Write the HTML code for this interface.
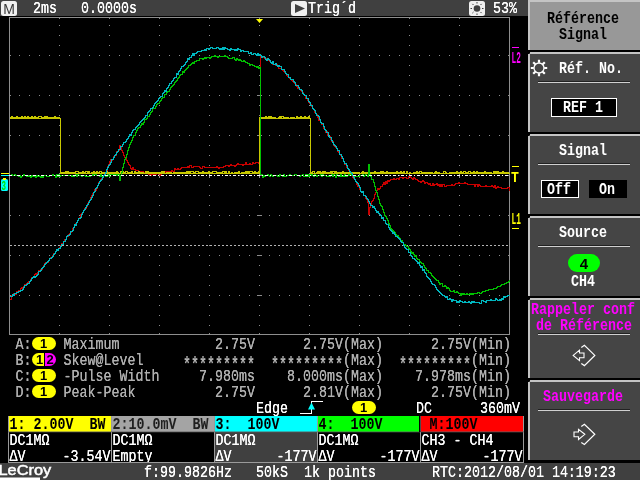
<!DOCTYPE html>
<html lang="fr"><head><meta charset="utf-8"><title>LeCroy - Référence Signal</title>
<style>html,body{margin:0;padding:0;background:#000;overflow:hidden}svg{display:block;will-change:transform}text{font-family:"Liberation Mono",monospace;font-size:16.5px;white-space:pre}.s text,.s{font-family:"Liberation Sans",sans-serif}</style></head><body>
<svg width="640" height="480" viewBox="0 0 640 480">
<defs><filter id="b" x="-2%" y="-2%" width="104%" height="104%"><feOffset dx="0.55" dy="0" result="o"/><feMerge><feMergeNode in="SourceGraphic"/><feMergeNode in="o"/></feMerge></filter> <filter id="b3" x="-2%" y="-2%" width="104%" height="104%"><feOffset dx="0.8" dy="0" result="o"/><feMerge><feMergeNode in="SourceGraphic"/><feMergeNode in="o"/></feMerge></filter><filter id="b2" x="-2%" y="-2%" width="104%" height="104%"><feOffset dx="0.4" dy="0" result="o"/><feMerge><feMergeNode in="SourceGraphic"/><feMergeNode in="o"/></feMerge></filter></defs>
<rect width="640" height="480" fill="#000"/>
<rect x="0" y="0" width="528" height="16" fill="#404040"/>
<rect x="1" y="1" width="16" height="15" rx="2.5" fill="#f0f0f0"/>
<text class="s" x="9" y="14" text-anchor="middle" fill="#383838" style="font-size:14px">M</text>
<text transform="translate(33,13) scale(0.808,1)" fill="#fff" filter="url(#b)">2ms</text>
<text transform="translate(81,13) scale(0.808,1)" fill="#fff" filter="url(#b)">0.0000s</text>
<rect x="291" y="1" width="16" height="15" rx="2.5" fill="#f0f0f0"/>
<path d="M295,4 L305,8.5 L295,13 Z" fill="#404040"/>
<text transform="translate(308,13) scale(0.808,1)" fill="#fff" filter="url(#b)">Trig´d</text>
<rect x="469" y="1" width="16" height="15" rx="2.5" fill="#f0f0f0"/>
<circle cx="477" cy="8.5" r="3.3" fill="#404040"/>
<path d="M482.0,8.5 L483.5,8.5 M480.5,12.0 L481.6,13.1 M477.0,13.5 L477.0,15.0 M473.5,12.0 L472.4,13.1 M472.0,8.5 L470.5,8.5 M473.5,5.0 L472.4,3.9 M477.0,3.5 L477.0,2.0 M480.5,5.0 L481.6,3.9" stroke="#404040" stroke-width="1" fill="none"/>
<text transform="translate(493,13) scale(0.808,1)" fill="#fff" filter="url(#b)">53%</text>
<g shape-rendering="crispEdges">
<line x1="59.5" y1="25" x2="59.5" y2="326" stroke="#8c8c8c" stroke-width="1" stroke-dasharray="1,9"/>
<line x1="109.5" y1="25" x2="109.5" y2="326" stroke="#8c8c8c" stroke-width="1" stroke-dasharray="1,9"/>
<line x1="159.5" y1="25" x2="159.5" y2="326" stroke="#8c8c8c" stroke-width="1" stroke-dasharray="1,9"/>
<line x1="209.5" y1="25" x2="209.5" y2="326" stroke="#8c8c8c" stroke-width="1" stroke-dasharray="1,9"/>
<line x1="259.5" y1="25" x2="259.5" y2="326" stroke="#8c8c8c" stroke-width="1" stroke-dasharray="1,9"/>
<line x1="309.5" y1="25" x2="309.5" y2="326" stroke="#8c8c8c" stroke-width="1" stroke-dasharray="1,9"/>
<line x1="359.5" y1="25" x2="359.5" y2="326" stroke="#8c8c8c" stroke-width="1" stroke-dasharray="1,9"/>
<line x1="409.5" y1="25" x2="409.5" y2="326" stroke="#8c8c8c" stroke-width="1" stroke-dasharray="1,9"/>
<line x1="459.5" y1="25" x2="459.5" y2="326" stroke="#8c8c8c" stroke-width="1" stroke-dasharray="1,9"/>
<line x1="19" y1="55.5" x2="500" y2="55.5" stroke="#8c8c8c" stroke-width="1" stroke-dasharray="1,9"/>
<line x1="19" y1="95.5" x2="500" y2="95.5" stroke="#8c8c8c" stroke-width="1" stroke-dasharray="1,9"/>
<line x1="19" y1="135.5" x2="500" y2="135.5" stroke="#8c8c8c" stroke-width="1" stroke-dasharray="1,9"/>
<line x1="19" y1="175.5" x2="500" y2="175.5" stroke="#8c8c8c" stroke-width="1" stroke-dasharray="1,9"/>
<line x1="19" y1="215.5" x2="500" y2="215.5" stroke="#8c8c8c" stroke-width="1" stroke-dasharray="1,9"/>
<line x1="19" y1="255.5" x2="500" y2="255.5" stroke="#8c8c8c" stroke-width="1" stroke-dasharray="1,9"/>
<line x1="19" y1="295.5" x2="500" y2="295.5" stroke="#8c8c8c" stroke-width="1" stroke-dasharray="1,9"/>
<rect x="9.5" y="17.5" width="500" height="317" fill="none" stroke="#8e8e8e" stroke-width="1"/>
<path d="M10,55.5 h1 M508,55.5 h1 M257,55.5 h5 M10,95.5 h1 M508,95.5 h1 M257,95.5 h5 M10,135.5 h1 M508,135.5 h1 M257,135.5 h5 M10,175.5 h1 M508,175.5 h1 M257,175.5 h5 M10,215.5 h1 M508,215.5 h1 M257,215.5 h5 M10,255.5 h1 M508,255.5 h1 M257,255.5 h5 M10,295.5 h1 M508,295.5 h1 M257,295.5 h5 M59.5,18 v1 M59.5,333 v1 M59.5,173 v5 M109.5,18 v1 M109.5,333 v1 M109.5,173 v5 M159.5,18 v1 M159.5,333 v1 M159.5,173 v5 M209.5,18 v1 M209.5,333 v1 M209.5,173 v5 M259.5,18 v1 M259.5,333 v1 M259.5,173 v5 M309.5,18 v1 M309.5,333 v1 M309.5,173 v5 M359.5,18 v1 M359.5,333 v1 M359.5,173 v5 M409.5,18 v1 M409.5,333 v1 M409.5,173 v5 M459.5,18 v1 M459.5,333 v1 M459.5,173 v5" stroke="#8c8c8c" stroke-width="1" fill="none"/>
<line x1="10" y1="245.5" x2="509" y2="245.5" stroke="#b4b4b4" stroke-width="1" stroke-dasharray="2,2"/>
</g>
<g shape-rendering="crispEdges">
<path d="M10,299.5H11.5V295.5H12.5V294.5H13.5V293.5H14.5V293.5H15.5V294.5H16.5V291.5H17.5V291.5H18.5V290.5H19.5V291.5H20.5V288.5H21.5V287.5H22.5V288.5H23.5V286.5H24.5V284.5H25.5V285.5H26.5V283.5H27.5V282.5H28.5V281.5H29.5V281.5H30.5V279.5H31.5V277.5H32.5V277.5H33.5V277.5H34.5V274.5H35.5V273.5H36.5V274.5H37.5V272.5H38.5V270.5H39.5V270.5H40.5V269.5H41.5V269.5H42.5V267.5H43.5V265.5H44.5V263.5H45.5V262.5H46.5V262.5H47.5V262.5H48.5V260.5H49.5V258.5H50.5V257.5H51.5V257.5H52.5V255.5H53.5V253.5H54.5V253.5H55.5V251.5H56.5V250.5H57.5V249.5H58.5V248.5H59.5V247.5H60.5V245.5H61.5V243.5H62.5V244.5H63.5V241.5H64.5V239.5H65.5V239.5H66.5V236.5H67.5V236.5H68.5V234.5H69.5V233.5H70.5V232.5H71.5V231.5H72.5V228.5H73.5V227.5H74.5V225.5H75.5V223.5H76.5V222.5H77.5V220.5H78.5V218.5H79.5V217.5H80.5V214.5H81.5V213.5H82.5V212.5H83.5V210.5H84.5V208.5H85.5V208.5H86.5V206.5H87.5V203.5H88.5V201.5H89.5V200.5H90.5V197.5H91.5V195.5H92.5V193.5H93.5V192.5H94.5V189.5H95.5V190.5H96.5V188.5H97.5V185.5H98.5V182.5H99.5V181.5H100.5V179.5H101.5V178.5H102.5V176.5H103.5V175.5H104.5V174.5H105.5V172.5H106.5V170.5H107.5V166.5H108.5V164.5H109.5V161.5H110.5V159.5H111.5V160.5H112.5V159.5H113.5V156.5H114.5V155.5H115.5V155.5H116.5V151.5H117.5V151.5H118.5V150.5H119.5V145.5H120.5V147.5H121.5V150.5H122.5V152.5H123.5V155.5H124.5V157.5H125.5V158.5H126.5V160.5H127.5V162.5H128.5V164.5H129.5V165.5H130.5V168.5H131.5V169.5H132.5V167.5H133.5V169.5H134.5V169.5H135.5V170.5H136.5V170.5H137.5V170.5H138.5V172.5H139.5V171.5H140.5V171.5H141.5V171.5H142.5V171.5H143.5V173.5H144.5V172.5H145.5V173.5H146.5V173.5H147.5V172.5H148.5V174.5H149.5V174.5H150.5V175.5H151.5V173.5H152.5V174.5H153.5V174.5H154.5V174.5H155.5V174.5H156.5V173.5H157.5V173.5H158.5V175.5H159.5V175.5H160.5V174.5H161.5V173.5H162.5V172.5H163.5V173.5H164.5V173.5H165.5V171.5H166.5V172.5H167.5V171.5H168.5V171.5H169.5V171.5H170.5V171.5H171.5V170.5H172.5V171.5H173.5V171.5H174.5V168.5H175.5V169.5H176.5V169.5H177.5V168.5H178.5V169.5H179.5V169.5H180.5V168.5H181.5V167.5H182.5V167.5H183.5V167.5H184.5V167.5H185.5V167.5H186.5V167.5H187.5V166.5H188.5V167.5H189.5V165.5H190.5V165.5H191.5V167.5H192.5V167.5H193.5V166.5H194.5V166.5H195.5V166.5H196.5V166.5H197.5V166.5H198.5V166.5H199.5V167.5H200.5V168.5H201.5V168.5H202.5V166.5H203.5V166.5H204.5V167.5H205.5V167.5H206.5V167.5H207.5V167.5H208.5V167.5H209.5V167.5H210.5V167.5H211.5V167.5H212.5V167.5H213.5V167.5H214.5V167.5H215.5V167.5H216.5V166.5H217.5V167.5H218.5V168.5H219.5V167.5H220.5V167.5H221.5V167.5H222.5V167.5H223.5V166.5H224.5V166.5H225.5V165.5H226.5V165.5H227.5V165.5H228.5V166.5H229.5V165.5H230.5V164.5H231.5V165.5H232.5V165.5H233.5V165.5H234.5V166.5H235.5V165.5H236.5V164.5H237.5V163.5H238.5V164.5H239.5V164.5H240.5V164.5H241.5V164.5H242.5V165.5H243.5V164.5H244.5V164.5H245.5V162.5H246.5V164.5H247.5V164.5H248.5V164.5H249.5V163.5H250.5V164.5H251.5V164.5H252.5V162.5H253.5V163.5H254.5V163.5H255.5V162.5H256.5V162.5H257.5V162.5H258.5V163.5H259.5V162.5H260.5V56.5H261.5V56.5H262.5V57.5H263.5V57.5H264.5V58.5H265.5V58.5H266.5V58.5H267.5V60.5H268.5V60.5H269.5V61.5H270.5V62.5H271.5V62.5H272.5V64.5H273.5V64.5H274.5V64.5H275.5V65.5H276.5V64.5H277.5V66.5H278.5V68.5H279.5V68.5H280.5V68.5H281.5V69.5H282.5V70.5H283.5V71.5H284.5V72.5H285.5V73.5H286.5V75.5H287.5V76.5H288.5V77.5H289.5V78.5H290.5V79.5H291.5V80.5H292.5V81.5H293.5V82.5H294.5V83.5H295.5V84.5H296.5V86.5H297.5V88.5H298.5V88.5H299.5V89.5H300.5V90.5H301.5V91.5H302.5V92.5H303.5V94.5H304.5V95.5H305.5V98.5H306.5V98.5H307.5V100.5H308.5V102.5H309.5V103.5H310.5V104.5H311.5V106.5H312.5V108.5H313.5V109.5H314.5V112.5H315.5V113.5H316.5V114.5H317.5V117.5H318.5V120.5H319.5V120.5H320.5V122.5H321.5V124.5H322.5V124.5H323.5V128.5H324.5V129.5H325.5V132.5H326.5V131.5H327.5V135.5H328.5V136.5H329.5V136.5H330.5V139.5H331.5V141.5H332.5V141.5H333.5V145.5H334.5V146.5H335.5V147.5H336.5V148.5H337.5V151.5H338.5V152.5H339.5V154.5H340.5V155.5H341.5V158.5H342.5V158.5H343.5V161.5H344.5V164.5H345.5V163.5H346.5V167.5H347.5V168.5H348.5V170.5H349.5V172.5H350.5V172.5H351.5V175.5H352.5V177.5H353.5V178.5H354.5V179.5H355.5V181.5H356.5V184.5H357.5V186.5H358.5V186.5H359.5V189.5H360.5V191.5H361.5V192.5H362.5V192.5H363.5V195.5H364.5V195.5H365.5V198.5H366.5V199.5H367.5V202.5H368.5V214.5H369.5V207.5H370.5V205.5H371.5V201.5H372.5V200.5H373.5V198.5H374.5V194.5H375.5V192.5H376.5V190.5H377.5V188.5H378.5V189.5H379.5V188.5H380.5V186.5H381.5V186.5H382.5V184.5H383.5V182.5H384.5V184.5H385.5V181.5H386.5V183.5H387.5V180.5H388.5V181.5H389.5V180.5H390.5V179.5H391.5V179.5H392.5V179.5H393.5V178.5H394.5V179.5H395.5V179.5H396.5V178.5H397.5V178.5H398.5V179.5H399.5V177.5H400.5V177.5H401.5V177.5H402.5V178.5H403.5V177.5H404.5V177.5H405.5V177.5H406.5V178.5H407.5V178.5H408.5V176.5H409.5V176.5H410.5V177.5H411.5V178.5H412.5V179.5H413.5V177.5H414.5V178.5H415.5V179.5H416.5V179.5H417.5V180.5H418.5V181.5H419.5V181.5H420.5V182.5H421.5V181.5H422.5V180.5H423.5V181.5H424.5V183.5H425.5V182.5H426.5V182.5H427.5V183.5H428.5V184.5H429.5V183.5H430.5V185.5H431.5V185.5H432.5V183.5H433.5V185.5H434.5V184.5H435.5V184.5H436.5V183.5H437.5V185.5H438.5V184.5H439.5V186.5H440.5V184.5H441.5V186.5H442.5V184.5H443.5V184.5H444.5V186.5H445.5V186.5H446.5V185.5H447.5V185.5H448.5V185.5H449.5V185.5H450.5V185.5H451.5V184.5H452.5V185.5H453.5V185.5H454.5V184.5H455.5V183.5H456.5V183.5H457.5V183.5H458.5V182.5H459.5V183.5H460.5V183.5H461.5V183.5H462.5V183.5H463.5V183.5H464.5V182.5H465.5V183.5H466.5V183.5H467.5V184.5H468.5V184.5H469.5V184.5H470.5V184.5H471.5V184.5H472.5V184.5H473.5V184.5H474.5V186.5H475.5V184.5H476.5V184.5H477.5V186.5H478.5V184.5H479.5V185.5H480.5V186.5H481.5V186.5H482.5V186.5H483.5V186.5H484.5V186.5H485.5V185.5H486.5V186.5H487.5V186.5H488.5V186.5H489.5V186.5H490.5V186.5H491.5V185.5H492.5V186.5H493.5V187.5H494.5V185.5H495.5V188.5H496.5V187.5H497.5V186.5H498.5V187.5H499.5V187.5H500.5V187.5H501.5V188.5H502.5V188.5H503.5V188.5H504.5V188.5H505.5V188.5H506.5V188.5H507.5V187.5H508.5V187.5H509.5V190.5H510" fill="none" stroke="#c80000" stroke-width="1" stroke-linejoin="miter"/>
<path d="M10,118.5H11.5V118.5H12.5V118.5H13.5V118.5H14.5V118.5H15.5V118.5H16.5V118.5H17.5V118.5H18.5V118.5H19.5V118.5H20.5V118.5H21.5V118.5H22.5V118.5H23.5V118.5H24.5V118.5H25.5V118.5H26.5V118.5H27.5V118.5H28.5V118.5H29.5V118.5H30.5V118.5H31.5V118.5H32.5V118.5H33.5V118.5H34.5V118.5H35.5V118.5H36.5V118.5H37.5V118.5H38.5V118.5H39.5V118.5H40.5V118.5H41.5V118.5H42.5V118.5H43.5V118.5H44.5V118.5H45.5V118.5H46.5V118.5H47.5V118.5H48.5V118.5H49.5V118.5H50.5V118.5H51.5V118.5H52.5V118.5H53.5V118.5H54.5V118.5H55.5V118.5H56.5V118.5H57.5V118.5H58.5V118.5H59.5V118.5H60.5V173.5H61.5V173.5H62.5V173.5H63.5V173.5H64.5V173.5H65.5V173.5H66.5V173.5H67.5V173.5H68.5V173.5H69.5V173.5H70.5V173.5H71.5V173.5H72.5V173.5H73.5V173.5H74.5V173.5H75.5V173.5H76.5V173.5H77.5V173.5H78.5V173.5H79.5V173.5H80.5V173.5H81.5V173.5H82.5V173.5H83.5V173.5H84.5V173.5H85.5V173.5H86.5V173.5H87.5V173.5H88.5V173.5H89.5V173.5H90.5V173.5H91.5V173.5H92.5V173.5H93.5V173.5H94.5V173.5H95.5V173.5H96.5V173.5H97.5V173.5H98.5V173.5H99.5V173.5H100.5V173.5H101.5V173.5H102.5V173.5H103.5V173.5H104.5V173.5H105.5V173.5H106.5V173.5H107.5V173.5H108.5V173.5H109.5V173.5H110.5V173.5H111.5V173.5H112.5V173.5H113.5V173.5H114.5V173.5H115.5V173.5H116.5V173.5H117.5V173.5H118.5V173.5H119.5V173.5H120.5V173.5H121.5V173.5H122.5V173.5H123.5V173.5H124.5V173.5H125.5V173.5H126.5V173.5H127.5V173.5H128.5V173.5H129.5V173.5H130.5V173.5H131.5V173.5H132.5V173.5H133.5V173.5H134.5V173.5H135.5V173.5H136.5V173.5H137.5V173.5H138.5V173.5H139.5V173.5H140.5V173.5H141.5V173.5H142.5V173.5H143.5V173.5H144.5V173.5H145.5V173.5H146.5V173.5H147.5V173.5H148.5V173.5H149.5V173.5H150.5V173.5H151.5V173.5H152.5V173.5H153.5V173.5H154.5V173.5H155.5V173.5H156.5V173.5H157.5V173.5H158.5V173.5H159.5V173.5H160.5V173.5H161.5V173.5H162.5V173.5H163.5V173.5H164.5V173.5H165.5V173.5H166.5V173.5H167.5V173.5H168.5V173.5H169.5V173.5H170.5V173.5H171.5V173.5H172.5V173.5H173.5V173.5H174.5V173.5H175.5V173.5H176.5V173.5H177.5V173.5H178.5V173.5H179.5V173.5H180.5V173.5H181.5V173.5H182.5V173.5H183.5V173.5H184.5V173.5H185.5V173.5H186.5V173.5H187.5V173.5H188.5V173.5H189.5V173.5H190.5V173.5H191.5V173.5H192.5V173.5H193.5V173.5H194.5V173.5H195.5V173.5H196.5V173.5H197.5V173.5H198.5V173.5H199.5V173.5H200.5V173.5H201.5V173.5H202.5V173.5H203.5V173.5H204.5V173.5H205.5V173.5H206.5V173.5H207.5V173.5H208.5V173.5H209.5V173.5H210.5V173.5H211.5V173.5H212.5V173.5H213.5V173.5H214.5V173.5H215.5V173.5H216.5V173.5H217.5V173.5H218.5V173.5H219.5V173.5H220.5V173.5H221.5V173.5H222.5V173.5H223.5V173.5H224.5V173.5H225.5V173.5H226.5V173.5H227.5V173.5H228.5V173.5H229.5V173.5H230.5V173.5H231.5V173.5H232.5V173.5H233.5V173.5H234.5V173.5H235.5V173.5H236.5V173.5H237.5V173.5H238.5V173.5H239.5V173.5H240.5V173.5H241.5V173.5H242.5V173.5H243.5V173.5H244.5V173.5H245.5V173.5H246.5V173.5H247.5V173.5H248.5V173.5H249.5V173.5H250.5V173.5H251.5V173.5H252.5V173.5H253.5V173.5H254.5V173.5H255.5V173.5H256.5V173.5H257.5V173.5H258.5V173.5H259.5V118.5H260.5V118.5H261.5V118.5H262.5V118.5H263.5V118.5H264.5V118.5H265.5V118.5H266.5V118.5H267.5V118.5H268.5V118.5H269.5V118.5H270.5V118.5H271.5V118.5H272.5V118.5H273.5V118.5H274.5V118.5H275.5V118.5H276.5V118.5H277.5V118.5H278.5V118.5H279.5V118.5H280.5V118.5H281.5V118.5H282.5V118.5H283.5V118.5H284.5V118.5H285.5V118.5H286.5V118.5H287.5V118.5H288.5V118.5H289.5V118.5H290.5V118.5H291.5V118.5H292.5V118.5H293.5V118.5H294.5V118.5H295.5V118.5H296.5V118.5H297.5V118.5H298.5V118.5H299.5V118.5H300.5V118.5H301.5V118.5H302.5V118.5H303.5V118.5H304.5V118.5H305.5V118.5H306.5V118.5H307.5V118.5H308.5V118.5H309.5V118.5H310.5V173.5H311.5V173.5H312.5V173.5H313.5V173.5H314.5V173.5H315.5V173.5H316.5V173.5H317.5V173.5H318.5V173.5H319.5V173.5H320.5V173.5H321.5V173.5H322.5V173.5H323.5V173.5H324.5V173.5H325.5V173.5H326.5V173.5H327.5V173.5H328.5V173.5H329.5V173.5H330.5V173.5H331.5V173.5H332.5V173.5H333.5V173.5H334.5V173.5H335.5V173.5H336.5V173.5H337.5V173.5H338.5V173.5H339.5V173.5H340.5V173.5H341.5V173.5H342.5V173.5H343.5V173.5H344.5V173.5H345.5V173.5H346.5V173.5H347.5V173.5H348.5V173.5H349.5V173.5H350.5V173.5H351.5V173.5H352.5V173.5H353.5V173.5H354.5V173.5H355.5V173.5H356.5V173.5H357.5V173.5H358.5V173.5H359.5V173.5H360.5V173.5H361.5V173.5H362.5V173.5H363.5V173.5H364.5V173.5H365.5V173.5H366.5V173.5H367.5V173.5H368.5V173.5H369.5V173.5H370.5V173.5H371.5V173.5H372.5V173.5H373.5V173.5H374.5V173.5H375.5V173.5H376.5V173.5H377.5V173.5H378.5V173.5H379.5V173.5H380.5V173.5H381.5V173.5H382.5V173.5H383.5V173.5H384.5V173.5H385.5V173.5H386.5V173.5H387.5V173.5H388.5V173.5H389.5V173.5H390.5V173.5H391.5V173.5H392.5V173.5H393.5V173.5H394.5V173.5H395.5V173.5H396.5V173.5H397.5V173.5H398.5V173.5H399.5V173.5H400.5V173.5H401.5V173.5H402.5V173.5H403.5V173.5H404.5V173.5H405.5V173.5H406.5V173.5H407.5V173.5H408.5V173.5H409.5V173.5H410.5V173.5H411.5V173.5H412.5V173.5H413.5V173.5H414.5V173.5H415.5V173.5H416.5V173.5H417.5V173.5H418.5V173.5H419.5V173.5H420.5V173.5H421.5V173.5H422.5V173.5H423.5V173.5H424.5V173.5H425.5V173.5H426.5V173.5H427.5V173.5H428.5V173.5H429.5V173.5H430.5V173.5H431.5V173.5H432.5V173.5H433.5V173.5H434.5V173.5H435.5V173.5H436.5V173.5H437.5V173.5H438.5V173.5H439.5V173.5H440.5V173.5H441.5V173.5H442.5V173.5H443.5V173.5H444.5V173.5H445.5V173.5H446.5V173.5H447.5V173.5H448.5V173.5H449.5V173.5H450.5V173.5H451.5V173.5H452.5V173.5H453.5V173.5H454.5V173.5H455.5V173.5H456.5V173.5H457.5V173.5H458.5V173.5H459.5V173.5H460.5V173.5H461.5V173.5H462.5V173.5H463.5V173.5H464.5V173.5H465.5V173.5H466.5V173.5H467.5V173.5H468.5V173.5H469.5V173.5H470.5V173.5H471.5V173.5H472.5V173.5H473.5V173.5H474.5V173.5H475.5V173.5H476.5V173.5H477.5V173.5H478.5V173.5H479.5V173.5H480.5V173.5H481.5V173.5H482.5V173.5H483.5V173.5H484.5V173.5H485.5V173.5H486.5V173.5H487.5V173.5H488.5V173.5H489.5V173.5H490.5V173.5H491.5V173.5H492.5V173.5H493.5V173.5H494.5V173.5H495.5V173.5H496.5V173.5H497.5V173.5H498.5V173.5H499.5V173.5H500.5V173.5H501.5V173.5H502.5V173.5H503.5V173.5H504.5V173.5H505.5V173.5H506.5V173.5H507.5V173.5H508.5V173.5H509.5V173.5H510" fill="none" stroke="#c8c800" stroke-width="1" stroke-linejoin="miter"/>
<path d="M10,117.5H11.5V116.5H12.5V117.5H13.5V117.5H14.5V117.5H15.5V117.5H16.5V116.5H17.5V117.5H18.5V117.5H19.5V117.5H20.5V117.5H21.5V116.5H22.5V117.5H23.5V117.5H24.5V116.5H25.5V118.5H26.5V117.5H27.5V116.5H28.5V117.5H29.5V118.5H30.5V117.5H31.5V116.5H32.5V117.5H33.5V117.5H34.5V116.5H35.5V118.5H36.5V117.5H37.5V118.5H38.5V116.5H39.5V116.5H40.5V116.5H41.5V117.5H42.5V117.5H43.5V117.5H44.5V116.5H45.5V117.5H46.5V116.5H47.5V117.5H48.5V117.5H49.5V118.5H50.5V117.5H51.5V117.5H52.5V117.5H53.5V117.5H54.5V116.5H55.5V117.5H56.5V117.5H57.5V118.5H58.5V117.5H59.5V118.5H60.5V172.5H61.5V172.5H62.5V173.5H63.5V172.5H64.5V173.5H65.5V171.5H66.5V172.5H67.5V171.5H68.5V172.5H69.5V173.5H70.5V172.5H71.5V172.5H72.5V172.5H73.5V172.5H74.5V173.5H75.5V171.5H76.5V171.5H77.5V171.5H78.5V172.5H79.5V173.5H80.5V172.5H81.5V172.5H82.5V171.5H83.5V173.5H84.5V172.5H85.5V171.5H86.5V171.5H87.5V173.5H88.5V171.5H89.5V173.5H90.5V173.5H91.5V172.5H92.5V172.5H93.5V171.5H94.5V172.5H95.5V172.5H96.5V171.5H97.5V172.5H98.5V173.5H99.5V171.5H100.5V171.5H101.5V172.5H102.5V172.5H103.5V172.5H104.5V173.5H105.5V173.5H106.5V171.5H107.5V172.5H108.5V172.5H109.5V173.5H110.5V172.5H111.5V173.5H112.5V172.5H113.5V172.5H114.5V173.5H115.5V172.5H116.5V171.5H117.5V172.5H118.5V173.5H119.5V173.5H120.5V171.5H121.5V172.5H122.5V171.5H123.5V172.5H124.5V172.5H125.5V171.5H126.5V171.5H127.5V172.5H128.5V172.5H129.5V172.5H130.5V172.5H131.5V171.5H132.5V173.5H133.5V173.5H134.5V171.5H135.5V172.5H136.5V172.5H137.5V172.5H138.5V171.5H139.5V172.5H140.5V172.5H141.5V173.5H142.5V172.5H143.5V173.5H144.5V173.5H145.5V171.5H146.5V173.5H147.5V171.5H148.5V173.5H149.5V172.5H150.5V172.5H151.5V172.5H152.5V172.5H153.5V173.5H154.5V172.5H155.5V173.5H156.5V172.5H157.5V172.5H158.5V173.5H159.5V172.5H160.5V172.5H161.5V171.5H162.5V172.5H163.5V171.5H164.5V173.5H165.5V173.5H166.5V172.5H167.5V172.5H168.5V172.5H169.5V173.5H170.5V172.5H171.5V173.5H172.5V173.5H173.5V172.5H174.5V172.5H175.5V172.5H176.5V172.5H177.5V172.5H178.5V173.5H179.5V172.5H180.5V172.5H181.5V172.5H182.5V173.5H183.5V172.5H184.5V172.5H185.5V173.5H186.5V171.5H187.5V172.5H188.5V171.5H189.5V172.5H190.5V171.5H191.5V171.5H192.5V171.5H193.5V172.5H194.5V173.5H195.5V171.5H196.5V171.5H197.5V171.5H198.5V172.5H199.5V172.5H200.5V172.5H201.5V172.5H202.5V171.5H203.5V172.5H204.5V173.5H205.5V172.5H206.5V172.5H207.5V172.5H208.5V171.5H209.5V172.5H210.5V172.5H211.5V172.5H212.5V171.5H213.5V171.5H214.5V171.5H215.5V171.5H216.5V172.5H217.5V172.5H218.5V172.5H219.5V172.5H220.5V172.5H221.5V173.5H222.5V171.5H223.5V171.5H224.5V172.5H225.5V171.5H226.5V173.5H227.5V173.5H228.5V171.5H229.5V173.5H230.5V173.5H231.5V172.5H232.5V173.5H233.5V173.5H234.5V172.5H235.5V172.5H236.5V172.5H237.5V172.5H238.5V171.5H239.5V173.5H240.5V173.5H241.5V172.5H242.5V173.5H243.5V172.5H244.5V172.5H245.5V171.5H246.5V172.5H247.5V171.5H248.5V172.5H249.5V171.5H250.5V171.5H251.5V171.5H252.5V172.5H253.5V172.5H254.5V171.5H255.5V172.5H256.5V172.5H257.5V172.5H258.5V171.5H259.5V117.5H260.5V118.5H261.5V117.5H262.5V118.5H263.5V117.5H264.5V118.5H265.5V116.5H266.5V117.5H267.5V117.5H268.5V116.5H269.5V117.5H270.5V116.5H271.5V117.5H272.5V117.5H273.5V117.5H274.5V117.5H275.5V118.5H276.5V118.5H277.5V118.5H278.5V117.5H279.5V116.5H280.5V117.5H281.5V116.5H282.5V116.5H283.5V118.5H284.5V117.5H285.5V117.5H286.5V118.5H287.5V117.5H288.5V118.5H289.5V118.5H290.5V117.5H291.5V117.5H292.5V117.5H293.5V117.5H294.5V118.5H295.5V118.5H296.5V116.5H297.5V117.5H298.5V117.5H299.5V117.5H300.5V116.5H301.5V118.5H302.5V117.5H303.5V117.5H304.5V116.5H305.5V118.5H306.5V117.5H307.5V118.5H308.5V116.5H309.5V118.5H310.5V172.5H311.5V172.5H312.5V171.5H313.5V171.5H314.5V173.5H315.5V173.5H316.5V172.5H317.5V171.5H318.5V173.5H319.5V171.5H320.5V172.5H321.5V172.5H322.5V171.5H323.5V172.5H324.5V171.5H325.5V173.5H326.5V172.5H327.5V172.5H328.5V172.5H329.5V173.5H330.5V171.5H331.5V172.5H332.5V171.5H333.5V171.5H334.5V173.5H335.5V171.5H336.5V173.5H337.5V172.5H338.5V172.5H339.5V172.5H340.5V172.5H341.5V173.5H342.5V171.5H343.5V172.5H344.5V173.5H345.5V172.5H346.5V172.5H347.5V173.5H348.5V172.5H349.5V172.5H350.5V173.5H351.5V173.5H352.5V172.5H353.5V172.5H354.5V172.5H355.5V172.5H356.5V172.5H357.5V172.5H358.5V172.5H359.5V173.5H360.5V173.5H361.5V172.5H362.5V171.5H363.5V173.5H364.5V172.5H365.5V172.5H366.5V172.5H367.5V173.5H368.5V173.5H369.5V173.5H370.5V172.5H371.5V173.5H372.5V172.5H373.5V172.5H374.5V171.5H375.5V172.5H376.5V172.5H377.5V173.5H378.5V172.5H379.5V172.5H380.5V171.5H381.5V172.5H382.5V171.5H383.5V172.5H384.5V172.5H385.5V172.5H386.5V171.5H387.5V172.5H388.5V172.5H389.5V172.5H390.5V172.5H391.5V172.5H392.5V172.5H393.5V172.5H394.5V173.5H395.5V172.5H396.5V171.5H397.5V172.5H398.5V173.5H399.5V172.5H400.5V171.5H401.5V172.5H402.5V173.5H403.5V171.5H404.5V173.5H405.5V173.5H406.5V171.5H407.5V173.5H408.5V173.5H409.5V172.5H410.5V173.5H411.5V173.5H412.5V173.5H413.5V172.5H414.5V172.5H415.5V172.5H416.5V171.5H417.5V172.5H418.5V173.5H419.5V171.5H420.5V171.5H421.5V172.5H422.5V172.5H423.5V172.5H424.5V173.5H425.5V172.5H426.5V173.5H427.5V172.5H428.5V173.5H429.5V172.5H430.5V172.5H431.5V172.5H432.5V173.5H433.5V173.5H434.5V172.5H435.5V171.5H436.5V172.5H437.5V173.5H438.5V172.5H439.5V173.5H440.5V173.5H441.5V173.5H442.5V173.5H443.5V171.5H444.5V171.5H445.5V172.5H446.5V173.5H447.5V173.5H448.5V173.5H449.5V172.5H450.5V173.5H451.5V172.5H452.5V172.5H453.5V173.5H454.5V172.5H455.5V172.5H456.5V171.5H457.5V172.5H458.5V172.5H459.5V172.5H460.5V171.5H461.5V172.5H462.5V172.5H463.5V171.5H464.5V171.5H465.5V172.5H466.5V172.5H467.5V173.5H468.5V171.5H469.5V171.5H470.5V173.5H471.5V172.5H472.5V173.5H473.5V171.5H474.5V172.5H475.5V172.5H476.5V171.5H477.5V172.5H478.5V172.5H479.5V172.5H480.5V172.5H481.5V172.5H482.5V172.5H483.5V172.5H484.5V171.5H485.5V172.5H486.5V172.5H487.5V172.5H488.5V173.5H489.5V172.5H490.5V172.5H491.5V173.5H492.5V173.5H493.5V171.5H494.5V172.5H495.5V171.5H496.5V173.5H497.5V171.5H498.5V172.5H499.5V172.5H500.5V172.5H501.5V172.5H502.5V171.5H503.5V172.5H504.5V173.5H505.5V172.5H506.5V172.5H507.5V172.5H508.5V173.5H509.5V173.5H510" fill="none" stroke="#c8c800" stroke-width="1" stroke-linejoin="miter"/>
<path d="M10,175.5H11.5V174.5H12.5V175.5H13.5V175.5H14.5V174.5H15.5V175.5H16.5V175.5H17.5V175.5H18.5V176.5H19.5V175.5H20.5V177.5H21.5V176.5H22.5V175.5H23.5V174.5H24.5V175.5H25.5V175.5H26.5V176.5H27.5V175.5H28.5V176.5H29.5V176.5H30.5V177.5H31.5V175.5H32.5V176.5H33.5V176.5H34.5V176.5H35.5V177.5H36.5V175.5H37.5V176.5H38.5V175.5H39.5V176.5H40.5V177.5H41.5V176.5H42.5V177.5H43.5V175.5H44.5V175.5H45.5V175.5H46.5V176.5H47.5V176.5H48.5V176.5H49.5V175.5H50.5V175.5H51.5V175.5H52.5V174.5H53.5V175.5H54.5V175.5H55.5V177.5H56.5V174.5H57.5V176.5H58.5V174.5H59.5V176.5H60.5V175.5H61.5V175.5H62.5V175.5H63.5V175.5H64.5V175.5H65.5V175.5H66.5V175.5H67.5V175.5H68.5V175.5H69.5V175.5H70.5V175.5H71.5V176.5H72.5V175.5H73.5V176.5H74.5V175.5H75.5V174.5H76.5V176.5H77.5V174.5H78.5V175.5H79.5V175.5H80.5V175.5H81.5V176.5H82.5V175.5H83.5V175.5H84.5V175.5H85.5V176.5H86.5V176.5H87.5V176.5H88.5V176.5H89.5V176.5H90.5V175.5H91.5V175.5H92.5V174.5H93.5V175.5H94.5V174.5H95.5V174.5H96.5V175.5H97.5V175.5H98.5V175.5H99.5V176.5H100.5V174.5H101.5V176.5H102.5V175.5H103.5V175.5H104.5V175.5H105.5V176.5H106.5V176.5H107.5V174.5H108.5V175.5H109.5V176.5H110.5V174.5H111.5V174.5H112.5V174.5H113.5V175.5H114.5V174.5H115.5V175.5H116.5V174.5H117.5V175.5H118.5V174.5H119.5V180.5H120.5V175.5H121.5V172.5H122.5V167.5H123.5V163.5H124.5V159.5H125.5V157.5H126.5V154.5H127.5V150.5H128.5V147.5H129.5V144.5H130.5V142.5H131.5V140.5H132.5V137.5H133.5V135.5H134.5V135.5H135.5V132.5H136.5V130.5H137.5V128.5H138.5V127.5H139.5V127.5H140.5V125.5H141.5V123.5H142.5V124.5H143.5V122.5H144.5V119.5H145.5V119.5H146.5V118.5H147.5V116.5H148.5V116.5H149.5V114.5H150.5V112.5H151.5V111.5H152.5V108.5H153.5V108.5H154.5V108.5H155.5V106.5H156.5V104.5H157.5V103.5H158.5V103.5H159.5V101.5H160.5V100.5H161.5V98.5H162.5V97.5H163.5V97.5H164.5V94.5H165.5V94.5H166.5V92.5H167.5V91.5H168.5V91.5H169.5V89.5H170.5V87.5H171.5V86.5H172.5V85.5H173.5V84.5H174.5V82.5H175.5V81.5H176.5V80.5H177.5V78.5H178.5V77.5H179.5V75.5H180.5V74.5H181.5V74.5H182.5V71.5H183.5V72.5H184.5V70.5H185.5V69.5H186.5V68.5H187.5V67.5H188.5V65.5H189.5V65.5H190.5V64.5H191.5V63.5H192.5V62.5H193.5V63.5H194.5V61.5H195.5V61.5H196.5V60.5H197.5V60.5H198.5V60.5H199.5V58.5H200.5V58.5H201.5V58.5H202.5V59.5H203.5V58.5H204.5V57.5H205.5V58.5H206.5V57.5H207.5V57.5H208.5V57.5H209.5V58.5H210.5V57.5H211.5V56.5H212.5V56.5H213.5V56.5H214.5V55.5H215.5V56.5H216.5V56.5H217.5V57.5H218.5V56.5H219.5V56.5H220.5V56.5H221.5V56.5H222.5V56.5H223.5V56.5H224.5V55.5H225.5V56.5H226.5V56.5H227.5V57.5H228.5V58.5H229.5V58.5H230.5V58.5H231.5V58.5H232.5V57.5H233.5V57.5H234.5V59.5H235.5V60.5H236.5V58.5H237.5V59.5H238.5V60.5H239.5V59.5H240.5V60.5H241.5V61.5H242.5V61.5H243.5V60.5H244.5V61.5H245.5V62.5H246.5V62.5H247.5V63.5H248.5V63.5H249.5V65.5H250.5V64.5H251.5V64.5H252.5V65.5H253.5V65.5H254.5V66.5H255.5V66.5H256.5V67.5H257.5V66.5H258.5V68.5H259.5V67.5H260.5V174.5H261.5V174.5H262.5V177.5H263.5V175.5H264.5V176.5H265.5V175.5H266.5V175.5H267.5V174.5H268.5V175.5H269.5V176.5H270.5V174.5H271.5V175.5H272.5V176.5H273.5V175.5H274.5V175.5H275.5V175.5H276.5V175.5H277.5V176.5H278.5V176.5H279.5V174.5H280.5V175.5H281.5V175.5H282.5V176.5H283.5V174.5H284.5V176.5H285.5V176.5H286.5V175.5H287.5V175.5H288.5V175.5H289.5V174.5H290.5V175.5H291.5V175.5H292.5V175.5H293.5V175.5H294.5V174.5H295.5V174.5H296.5V175.5H297.5V175.5H298.5V175.5H299.5V176.5H300.5V175.5H301.5V175.5H302.5V174.5H303.5V176.5H304.5V176.5H305.5V174.5H306.5V176.5H307.5V174.5H308.5V176.5H309.5V174.5H310.5V175.5H311.5V174.5H312.5V175.5H313.5V176.5H314.5V174.5H315.5V175.5H316.5V176.5H317.5V175.5H318.5V175.5H319.5V175.5H320.5V174.5H321.5V176.5H322.5V174.5H323.5V175.5H324.5V175.5H325.5V175.5H326.5V176.5H327.5V176.5H328.5V175.5H329.5V176.5H330.5V175.5H331.5V174.5H332.5V176.5H333.5V174.5H334.5V175.5H335.5V177.5H336.5V174.5H337.5V175.5H338.5V176.5H339.5V176.5H340.5V174.5H341.5V176.5H342.5V175.5H343.5V176.5H344.5V174.5H345.5V176.5H346.5V176.5H347.5V175.5H348.5V174.5H349.5V175.5H350.5V174.5H351.5V175.5H352.5V175.5H353.5V176.5H354.5V176.5H355.5V176.5H356.5V176.5H357.5V176.5H358.5V176.5H359.5V175.5H360.5V175.5H361.5V175.5H362.5V174.5H363.5V176.5H364.5V175.5H365.5V174.5H366.5V175.5H367.5V176.5H368.5V164.5H369.5V174.5H370.5V176.5H371.5V179.5H372.5V179.5H373.5V182.5H374.5V186.5H375.5V190.5H376.5V192.5H377.5V196.5H378.5V199.5H379.5V203.5H380.5V205.5H381.5V206.5H382.5V209.5H383.5V212.5H384.5V215.5H385.5V216.5H386.5V218.5H387.5V220.5H388.5V223.5H389.5V225.5H390.5V228.5H391.5V229.5H392.5V230.5H393.5V231.5H394.5V232.5H395.5V234.5H396.5V236.5H397.5V235.5H398.5V237.5H399.5V238.5H400.5V240.5H401.5V240.5H402.5V242.5H403.5V244.5H404.5V244.5H405.5V245.5H406.5V246.5H407.5V246.5H408.5V248.5H409.5V249.5H410.5V251.5H411.5V253.5H412.5V252.5H413.5V254.5H414.5V256.5H415.5V255.5H416.5V258.5H417.5V259.5H418.5V259.5H419.5V261.5H420.5V262.5H421.5V263.5H422.5V263.5H423.5V265.5H424.5V267.5H425.5V268.5H426.5V270.5H427.5V270.5H428.5V272.5H429.5V272.5H430.5V273.5H431.5V275.5H432.5V276.5H433.5V277.5H434.5V278.5H435.5V279.5H436.5V280.5H437.5V280.5H438.5V282.5H439.5V284.5H440.5V283.5H441.5V283.5H442.5V286.5H443.5V286.5H444.5V285.5H445.5V286.5H446.5V288.5H447.5V287.5H448.5V288.5H449.5V290.5H450.5V291.5H451.5V291.5H452.5V291.5H453.5V290.5H454.5V292.5H455.5V292.5H456.5V291.5H457.5V292.5H458.5V293.5H459.5V293.5H460.5V295.5H461.5V293.5H462.5V294.5H463.5V293.5H464.5V294.5H465.5V294.5H466.5V293.5H467.5V294.5H468.5V294.5H469.5V293.5H470.5V294.5H471.5V293.5H472.5V294.5H473.5V293.5H474.5V293.5H475.5V293.5H476.5V293.5H477.5V292.5H478.5V292.5H479.5V293.5H480.5V293.5H481.5V292.5H482.5V291.5H483.5V291.5H484.5V291.5H485.5V290.5H486.5V290.5H487.5V290.5H488.5V289.5H489.5V289.5H490.5V289.5H491.5V289.5H492.5V289.5H493.5V288.5H494.5V288.5H495.5V288.5H496.5V287.5H497.5V286.5H498.5V286.5H499.5V286.5H500.5V285.5H501.5V284.5H502.5V284.5H503.5V284.5H504.5V283.5H505.5V283.5H506.5V282.5H507.5V282.5H508.5V281.5H509.5V280.5H510" fill="none" stroke="#00c000" stroke-width="1" stroke-linejoin="miter"/>
<path d="M10,296.5H11.5V296.5H12.5V294.5H13.5V295.5H14.5V293.5H15.5V293.5H16.5V292.5H17.5V292.5H18.5V291.5H19.5V291.5H20.5V290.5H21.5V290.5H22.5V289.5H23.5V287.5H24.5V285.5H25.5V285.5H26.5V284.5H27.5V283.5H28.5V283.5H29.5V281.5H30.5V280.5H31.5V278.5H32.5V277.5H33.5V276.5H34.5V277.5H35.5V276.5H36.5V275.5H37.5V274.5H38.5V271.5H39.5V271.5H40.5V270.5H41.5V268.5H42.5V267.5H43.5V266.5H44.5V264.5H45.5V263.5H46.5V262.5H47.5V261.5H48.5V260.5H49.5V258.5H50.5V258.5H51.5V257.5H52.5V256.5H53.5V254.5H54.5V253.5H55.5V251.5H56.5V249.5H57.5V250.5H58.5V248.5H59.5V248.5H60.5V246.5H61.5V244.5H62.5V244.5H63.5V241.5H64.5V241.5H65.5V239.5H66.5V236.5H67.5V235.5H68.5V235.5H69.5V234.5H70.5V231.5H71.5V231.5H72.5V230.5H73.5V227.5H74.5V224.5H75.5V225.5H76.5V222.5H77.5V220.5H78.5V218.5H79.5V218.5H80.5V217.5H81.5V214.5H82.5V212.5H83.5V210.5H84.5V209.5H85.5V207.5H86.5V205.5H87.5V204.5H88.5V202.5H89.5V200.5H90.5V199.5H91.5V197.5H92.5V195.5H93.5V192.5H94.5V191.5H95.5V188.5H96.5V187.5H97.5V185.5H98.5V183.5H99.5V181.5H100.5V180.5H101.5V179.5H102.5V177.5H103.5V175.5H104.5V174.5H105.5V172.5H106.5V169.5H107.5V167.5H108.5V165.5H109.5V164.5H110.5V162.5H111.5V159.5H112.5V159.5H113.5V157.5H114.5V155.5H115.5V154.5H116.5V152.5H117.5V151.5H118.5V149.5H119.5V149.5H120.5V146.5H121.5V146.5H122.5V144.5H123.5V142.5H124.5V142.5H125.5V141.5H126.5V139.5H127.5V138.5H128.5V136.5H129.5V134.5H130.5V135.5H131.5V132.5H132.5V130.5H133.5V129.5H134.5V129.5H135.5V127.5H136.5V126.5H137.5V125.5H138.5V124.5H139.5V122.5H140.5V121.5H141.5V120.5H142.5V119.5H143.5V118.5H144.5V117.5H145.5V115.5H146.5V115.5H147.5V112.5H148.5V111.5H149.5V110.5H150.5V108.5H151.5V108.5H152.5V107.5H153.5V105.5H154.5V103.5H155.5V102.5H156.5V101.5H157.5V100.5H158.5V98.5H159.5V97.5H160.5V96.5H161.5V96.5H162.5V93.5H163.5V92.5H164.5V90.5H165.5V91.5H166.5V88.5H167.5V87.5H168.5V85.5H169.5V83.5H170.5V83.5H171.5V81.5H172.5V80.5H173.5V78.5H174.5V77.5H175.5V77.5H176.5V73.5H177.5V74.5H178.5V71.5H179.5V70.5H180.5V68.5H181.5V66.5H182.5V66.5H183.5V65.5H184.5V64.5H185.5V62.5H186.5V61.5H187.5V58.5H188.5V59.5H189.5V57.5H190.5V57.5H191.5V55.5H192.5V53.5H193.5V55.5H194.5V53.5H195.5V53.5H196.5V52.5H197.5V51.5H198.5V51.5H199.5V51.5H200.5V51.5H201.5V50.5H202.5V50.5H203.5V50.5H204.5V49.5H205.5V50.5H206.5V48.5H207.5V48.5H208.5V49.5H209.5V48.5H210.5V47.5H211.5V47.5H212.5V48.5H213.5V48.5H214.5V48.5H215.5V48.5H216.5V47.5H217.5V47.5H218.5V48.5H219.5V49.5H220.5V48.5H221.5V49.5H222.5V47.5H223.5V49.5H224.5V47.5H225.5V48.5H226.5V48.5H227.5V49.5H228.5V49.5H229.5V50.5H230.5V48.5H231.5V49.5H232.5V49.5H233.5V49.5H234.5V50.5H235.5V49.5H236.5V50.5H237.5V48.5H238.5V49.5H239.5V49.5H240.5V51.5H241.5V50.5H242.5V50.5H243.5V51.5H244.5V51.5H245.5V51.5H246.5V51.5H247.5V51.5H248.5V53.5H249.5V53.5H250.5V52.5H251.5V54.5H252.5V54.5H253.5V53.5H254.5V53.5H255.5V54.5H256.5V55.5H257.5V53.5H258.5V55.5H259.5V54.5H260.5V55.5H261.5V57.5H262.5V56.5H263.5V56.5H264.5V57.5H265.5V59.5H266.5V60.5H267.5V58.5H268.5V59.5H269.5V60.5H270.5V62.5H271.5V63.5H272.5V61.5H273.5V64.5H274.5V64.5H275.5V63.5H276.5V65.5H277.5V66.5H278.5V65.5H279.5V66.5H280.5V66.5H281.5V69.5H282.5V69.5H283.5V69.5H284.5V71.5H285.5V73.5H286.5V74.5H287.5V74.5H288.5V77.5H289.5V77.5H290.5V79.5H291.5V79.5H292.5V79.5H293.5V81.5H294.5V82.5H295.5V85.5H296.5V85.5H297.5V85.5H298.5V87.5H299.5V89.5H300.5V89.5H301.5V90.5H302.5V93.5H303.5V94.5H304.5V95.5H305.5V95.5H306.5V98.5H307.5V98.5H308.5V101.5H309.5V102.5H310.5V105.5H311.5V105.5H312.5V108.5H313.5V109.5H314.5V110.5H315.5V113.5H316.5V115.5H317.5V115.5H318.5V116.5H319.5V119.5H320.5V122.5H321.5V123.5H322.5V123.5H323.5V126.5H324.5V129.5H325.5V130.5H326.5V132.5H327.5V132.5H328.5V136.5H329.5V137.5H330.5V137.5H331.5V140.5H332.5V142.5H333.5V144.5H334.5V145.5H335.5V146.5H336.5V148.5H337.5V150.5H338.5V150.5H339.5V154.5H340.5V154.5H341.5V156.5H342.5V158.5H343.5V161.5H344.5V163.5H345.5V163.5H346.5V165.5H347.5V168.5H348.5V169.5H349.5V171.5H350.5V172.5H351.5V173.5H352.5V175.5H353.5V177.5H354.5V179.5H355.5V181.5H356.5V182.5H357.5V183.5H358.5V185.5H359.5V187.5H360.5V191.5H361.5V192.5H362.5V191.5H363.5V195.5H364.5V195.5H365.5V196.5H366.5V198.5H367.5V199.5H368.5V201.5H369.5V203.5H370.5V205.5H371.5V205.5H372.5V207.5H373.5V206.5H374.5V208.5H375.5V210.5H376.5V212.5H377.5V211.5H378.5V213.5H379.5V214.5H380.5V215.5H381.5V218.5H382.5V217.5H383.5V220.5H384.5V220.5H385.5V223.5H386.5V224.5H387.5V224.5H388.5V227.5H389.5V229.5H390.5V230.5H391.5V231.5H392.5V233.5H393.5V232.5H394.5V234.5H395.5V236.5H396.5V236.5H397.5V237.5H398.5V238.5H399.5V239.5H400.5V241.5H401.5V242.5H402.5V242.5H403.5V245.5H404.5V247.5H405.5V248.5H406.5V249.5H407.5V249.5H408.5V252.5H409.5V252.5H410.5V255.5H411.5V256.5H412.5V258.5H413.5V258.5H414.5V259.5H415.5V260.5H416.5V261.5H417.5V263.5H418.5V262.5H419.5V265.5H420.5V267.5H421.5V266.5H422.5V270.5H423.5V269.5H424.5V272.5H425.5V273.5H426.5V276.5H427.5V277.5H428.5V278.5H429.5V279.5H430.5V281.5H431.5V283.5H432.5V284.5H433.5V284.5H434.5V285.5H435.5V287.5H436.5V289.5H437.5V290.5H438.5V291.5H439.5V292.5H440.5V293.5H441.5V294.5H442.5V295.5H443.5V295.5H444.5V296.5H445.5V297.5H446.5V296.5H447.5V299.5H448.5V299.5H449.5V298.5H450.5V299.5H451.5V301.5H452.5V299.5H453.5V300.5H454.5V300.5H455.5V300.5H456.5V302.5H457.5V301.5H458.5V302.5H459.5V300.5H460.5V301.5H461.5V301.5H462.5V302.5H463.5V302.5H464.5V301.5H465.5V302.5H466.5V302.5H467.5V302.5H468.5V301.5H469.5V302.5H470.5V303.5H471.5V301.5H472.5V302.5H473.5V301.5H474.5V302.5H475.5V302.5H476.5V302.5H477.5V302.5H478.5V302.5H479.5V303.5H480.5V303.5H481.5V300.5H482.5V300.5H483.5V301.5H484.5V301.5H485.5V302.5H486.5V300.5H487.5V300.5H488.5V300.5H489.5V300.5H490.5V299.5H491.5V300.5H492.5V300.5H493.5V300.5H494.5V300.5H495.5V298.5H496.5V299.5H497.5V300.5H498.5V300.5H499.5V299.5H500.5V300.5H501.5V298.5H502.5V299.5H503.5V296.5H504.5V297.5H505.5V296.5H506.5V296.5H507.5V295.5H508.5V295.5H509.5V295.5H510" fill="none" stroke="#00b8c0" stroke-width="1" stroke-linejoin="miter"/>
<line x1="9" y1="175.5" x2="509" y2="175.5" stroke="#ffffff" stroke-width="1" stroke-dasharray="3,2,1,2"/>
</g>
<path d="M256,19 h7 l-3.5,4 Z" fill="#ffff00"/>
<rect x="1" y="173" width="8" height="1" fill="#ffff00"/><rect x="1" y="175" width="8" height="1" fill="#00ffff"/>
<rect x="1" y="179" width="7" height="12" rx="1.5" fill="#00ffff"/><rect x="3" y="178" width="3" height="2" fill="#ffff00"/>
<text transform="translate(1.5,190) scale(0.62,1)" fill="#00e000" font-weight="bold" style="font-size:12px">3</text>
<rect x="512" y="47" width="7" height="1" fill="#ff00ff"/>
<text transform="translate(511.5,63) scale(0.47,1)" fill="#ff00ff" font-weight="bold" style="font-size:16.5px">L2</text>
<rect x="512" y="166" width="7" height="1" fill="#ffff00"/>
<text transform="translate(511,182) scale(0.85,1)" fill="#ffff00" font-weight="bold" style="font-size:15.5px">T</text>
<text transform="translate(511.5,224) scale(0.47,1)" fill="#ffff00" font-weight="bold" style="font-size:16.5px">L1</text>
<rect x="512" y="228" width="7" height="1" fill="#ffff00"/>
<text transform="translate(15.5,349) scale(0.808,1)" fill="#b0b0b0" filter="url(#b2)">A:</text>
<rect x="32" y="337" width="24" height="13" rx="6.5" fill="#ffff00"/>
<text class="s" x="43.5" y="348" text-anchor="middle" fill="#000" font-weight="bold" style="font-size:13px">1</text>
<text transform="translate(63.5,349) scale(0.808,1)" fill="#b0b0b0" filter="url(#b2)">Maximum</text>
<text transform="translate(215,349) scale(0.808,1)" fill="#b0b0b0" filter="url(#b2)">2.75V</text>
<text transform="translate(303,349) scale(0.808,1)" fill="#b0b0b0" filter="url(#b2)">2.75V(Max)</text>
<text transform="translate(431,349) scale(0.808,1)" fill="#b0b0b0" filter="url(#b2)">2.75V(Min)</text>
<text transform="translate(15.5,365) scale(0.808,1)" fill="#b0b0b0" filter="url(#b2)">B:</text>
<path d="M44,353 h-5.5 a6.5,6.5 0 0 0 0,13 h5.5 Z" fill="#ffff00"/>
<path d="M45,353 h4.5 a6.5,6.5 0 0 1 0,13 h-4.5 Z" fill="#ff00ff"/>
<text class="s" x="39.5" y="364" text-anchor="middle" fill="#000" font-weight="bold" style="font-size:13px">1</text>
<text class="s" x="50" y="364" text-anchor="middle" fill="#000" font-weight="bold" style="font-size:13px">2</text>
<text transform="translate(63.5,365) scale(0.808,1)" fill="#b0b0b0" filter="url(#b2)">Skew@Level</text>
<text transform="translate(183,370.5) scale(0.635,1)" fill="#b0b0b0" font-weight="bold" style="font-size:21px">*********</text>
<text transform="translate(271,370.5) scale(0.635,1)" fill="#b0b0b0" font-weight="bold" style="font-size:21px">*********</text>
<text transform="translate(343,365) scale(0.808,1)" fill="#b0b0b0" filter="url(#b2)">(Max)</text>
<text transform="translate(399,370.5) scale(0.635,1)" fill="#b0b0b0" font-weight="bold" style="font-size:21px">*********</text>
<text transform="translate(471,365) scale(0.808,1)" fill="#b0b0b0" filter="url(#b2)">(Min)</text>
<text transform="translate(15.5,381) scale(0.808,1)" fill="#b0b0b0" filter="url(#b2)">C:</text>
<rect x="32" y="369" width="24" height="13" rx="6.5" fill="#ffff00"/>
<text class="s" x="43.5" y="380" text-anchor="middle" fill="#000" font-weight="bold" style="font-size:13px">1</text>
<text transform="translate(63.5,381) scale(0.808,1)" fill="#b0b0b0" filter="url(#b2)">-Pulse Width</text>
<text transform="translate(199,381) scale(0.808,1)" fill="#b0b0b0" filter="url(#b2)">7.980ms</text>
<text transform="translate(287,381) scale(0.808,1)" fill="#b0b0b0" filter="url(#b2)">8.000ms(Max)</text>
<text transform="translate(415,381) scale(0.808,1)" fill="#b0b0b0" filter="url(#b2)">7.978ms(Min)</text>
<text transform="translate(15.5,397) scale(0.808,1)" fill="#b0b0b0" filter="url(#b2)">D:</text>
<rect x="32" y="385" width="24" height="13" rx="6.5" fill="#ffff00"/>
<text class="s" x="43.5" y="396" text-anchor="middle" fill="#000" font-weight="bold" style="font-size:13px">1</text>
<text transform="translate(63.5,397) scale(0.808,1)" fill="#b0b0b0" filter="url(#b2)">Peak-Peak</text>
<text transform="translate(215,397) scale(0.808,1)" fill="#b0b0b0" filter="url(#b2)">2.75V</text>
<text transform="translate(303,397) scale(0.808,1)" fill="#b0b0b0" filter="url(#b2)">2.81V(Max)</text>
<text transform="translate(431,397) scale(0.808,1)" fill="#b0b0b0" filter="url(#b2)">2.75V(Min)</text>
<text transform="translate(256,413) scale(0.808,1)" fill="#fff" filter="url(#b)">Edge</text>
<path d="M300,413.5 H311.5 V401.5 H323" stroke="#fff" stroke-width="1" fill="none" shape-rendering="crispEdges"/>
<path d="M311.5,402.5 l3.5,7 h-7 Z" fill="#00ffff"/>
<rect x="352" y="401" width="24" height="13" rx="6.5" fill="#ffff00"/>
<text class="s" x="363.5" y="412" text-anchor="middle" fill="#000" font-weight="bold" style="font-size:13px">1</text>
<text transform="translate(416,413) scale(0.808,1)" fill="#fff" filter="url(#b)">DC</text>
<text transform="translate(480,413) scale(0.808,1)" fill="#fff" filter="url(#b)">360mV</text>
<rect x="8" y="432" width="103" height="31" fill="#000"/>
<rect x="8" y="416" width="103" height="16" fill="#ffff00"/>
<rect x="8" y="416" width="1" height="47" fill="#9a9a9a"/>
<text transform="translate(9.5,429) scale(0.808,1)" fill="#000" font-weight="bold">1: 2.00V  BW</text>
<text transform="translate(9.5,445) scale(0.808,1)" fill="#fff" filter="url(#b)">DC1MΩ</text>
<text transform="translate(9.5,460.5) scale(0.808,1)" fill="#fff" filter="url(#b)">ΔV</text>
<text transform="translate(62.5,460.5) scale(0.808,1)" fill="#fff" filter="url(#b)">-3.54V</text>
<rect x="111" y="432" width="103" height="31" fill="#000"/>
<rect x="111" y="416" width="103" height="16" fill="#a4a4a4"/>
<rect x="111" y="416" width="1" height="47" fill="#9a9a9a"/>
<text transform="translate(112.5,429) scale(0.808,1)" fill="#202020" font-weight="bold">2:10.0mV  BW</text>
<text transform="translate(112.5,445) scale(0.808,1)" fill="#fff" filter="url(#b)">DC1MΩ</text>
<text transform="translate(112.5,460.5) scale(0.808,1)" fill="#fff" filter="url(#b)">Empty</text>
<rect x="214" y="432" width="103" height="31" fill="#404040"/>
<rect x="214" y="416" width="103" height="16" fill="#00ffff"/>
<rect x="214" y="416" width="1" height="47" fill="#9a9a9a"/>
<text transform="translate(215.5,429) scale(0.808,1)" fill="#000" font-weight="bold">3:  100V</text>
<text transform="translate(215.5,445) scale(0.808,1)" fill="#fff" filter="url(#b)">DC1MΩ</text>
<text transform="translate(215.5,460.5) scale(0.808,1)" fill="#fff" filter="url(#b)">ΔV</text>
<text transform="translate(276.5,460.5) scale(0.808,1)" fill="#fff" filter="url(#b)">-177V</text>
<rect x="317" y="432" width="103" height="31" fill="#000"/>
<rect x="317" y="416" width="103" height="16" fill="#00ff00"/>
<rect x="317" y="416" width="1" height="47" fill="#9a9a9a"/>
<text transform="translate(318.5,429) scale(0.808,1)" fill="#000" font-weight="bold">4:  100V</text>
<text transform="translate(318.5,445) scale(0.808,1)" fill="#fff" filter="url(#b)">DC1MΩ</text>
<text transform="translate(318.5,460.5) scale(0.808,1)" fill="#fff" filter="url(#b)">ΔV</text>
<text transform="translate(379.5,460.5) scale(0.808,1)" fill="#fff" filter="url(#b)">-177V</text>
<rect x="420" y="432" width="103" height="31" fill="#000"/>
<rect x="420" y="416" width="103" height="16" fill="#ff0000"/>
<rect x="420" y="416" width="1" height="47" fill="#9a9a9a"/>
<text transform="translate(421.5,429) scale(0.808,1)" fill="#000" font-weight="bold"> M:100V</text>
<text transform="translate(421.5,445) scale(0.808,1)" fill="#fff" filter="url(#b)">CH3 - CH4</text>
<text transform="translate(421.5,460.5) scale(0.808,1)" fill="#fff" filter="url(#b)">ΔV</text>
<text transform="translate(482.5,460.5) scale(0.808,1)" fill="#fff" filter="url(#b)">-177V</text>
<rect x="523" y="416" width="1" height="47" fill="#9a9a9a"/>
<rect x="8" y="462" width="516" height="1" fill="#9a9a9a"/>
<rect x="8" y="431.5" width="516" height="0.8" fill="#606060"/>
<rect x="419" y="416" width="1.5" height="16" fill="#000"/>
<rect x="0" y="463" width="640" height="17" fill="#404040"/>
<text class="s" transform="translate(-1.5,475.3) scale(1.09,1)" fill="#fff" stroke="#fff" stroke-width="0.5" style="font-size:15px">LeCroy</text>
<rect x="0" y="477.5" width="40" height="2.5" fill="#fff"/>
<text transform="translate(144,477) scale(0.808,1)" fill="#fff" filter="url(#b)">f:99.9826Hz</text>
<text transform="translate(256,477) scale(0.808,1)" fill="#fff" filter="url(#b)">50kS</text>
<text transform="translate(304,477) scale(0.808,1)" fill="#fff" filter="url(#b)">1k points</text>
<text transform="translate(432,477) scale(0.808,1)" fill="#fff" filter="url(#b)">RTC:2012/08/01 14:19:23</text>
<rect x="528" y="0" width="112" height="50" fill="#989898"/>
<rect x="528" y="0" width="2" height="50" fill="#c4c4c4"/><rect x="528" y="0" width="112" height="2" fill="#c4c4c4"/>
<text transform="translate(547,23) scale(0.808,1)" fill="#000" font-weight="bold">Référence</text>
<text transform="translate(559,39) scale(0.808,1)" fill="#000" font-weight="bold">Signal</text>
<rect x="529" y="53" width="111" height="79" fill="#454545"/>
<rect x="530" y="52" width="110" height="2" fill="#c4c4c4"/><rect x="528" y="54" width="2" height="78" fill="#c4c4c4"/>
<rect x="529" y="135" width="111" height="79" fill="#454545"/>
<rect x="530" y="134" width="110" height="2" fill="#c4c4c4"/><rect x="528" y="136" width="2" height="78" fill="#c4c4c4"/>
<rect x="529" y="217" width="111" height="79" fill="#454545"/>
<rect x="530" y="216" width="110" height="2" fill="#c4c4c4"/><rect x="528" y="218" width="2" height="78" fill="#c4c4c4"/>
<rect x="529" y="299" width="111" height="79" fill="#454545"/>
<rect x="530" y="298" width="110" height="2" fill="#c4c4c4"/><rect x="528" y="300" width="2" height="78" fill="#c4c4c4"/>
<rect x="529" y="381" width="111" height="79" fill="#454545"/>
<rect x="530" y="380" width="110" height="2" fill="#c4c4c4"/><rect x="528" y="382" width="2" height="78" fill="#c4c4c4"/>
<circle cx="539" cy="68" r="5" fill="none" stroke="#fff" stroke-width="1.3"/><path d="M544.20,68.00 L547.20,68.00 M542.68,71.68 L544.80,73.80 M539.00,73.20 L539.00,76.20 M535.32,71.68 L533.20,73.80 M533.80,68.00 L530.80,68.00 M535.32,64.32 L533.20,62.20 M539.00,62.80 L539.00,59.80 M542.68,64.32 L544.80,62.20" stroke="#fff" stroke-width="2.2" fill="none"/>
<text transform="translate(559,73) scale(0.808,1)" fill="#fff" font-weight="bold">Réf. No.</text>
<rect x="538" y="81" width="92" height="1" fill="#222"/><rect x="538" y="82" width="92" height="1" fill="#d0d0d0"/>
<rect x="551.5" y="98.5" width="65" height="18" fill="#000" stroke="#fff" stroke-width="1"/>
<text transform="translate(563,112) scale(0.808,1)" fill="#fff" font-weight="bold">REF 1</text>
<text transform="translate(559,154.5) scale(0.808,1)" fill="#fff" font-weight="bold">Signal</text>
<rect x="538" y="163" width="92" height="1" fill="#222"/><rect x="538" y="164" width="92" height="1" fill="#d0d0d0"/>
<rect x="541.5" y="180.5" width="37" height="17" fill="#000" stroke="#fff" stroke-width="1"/>
<rect x="589" y="180" width="38" height="18" fill="#000"/>
<text transform="translate(547,193.5) scale(0.808,1)" fill="#fff" font-weight="bold">Off</text>
<text transform="translate(599,193.5) scale(0.808,1)" fill="#fff" font-weight="bold">On</text>
<text transform="translate(559,236.5) scale(0.808,1)" fill="#fff" font-weight="bold">Source</text>
<rect x="538" y="245" width="92" height="1" fill="#222"/><rect x="538" y="246" width="92" height="1" fill="#d0d0d0"/>
<rect x="568" y="254" width="32" height="18" rx="9" fill="#00ff00"/>
<text class="s" x="584" y="268.5" text-anchor="middle" fill="#000" font-weight="bold" style="font-size:15px">4</text>
<text transform="translate(571,285.5) scale(0.808,1)" fill="#fff" font-weight="bold">CH4</text>
<text transform="translate(531,314) scale(0.808,1)" fill="#ff00ff" font-weight="bold">Rappeler conf</text>
<text transform="translate(536,330) scale(0.808,1)" fill="#ff00ff" font-weight="bold">de Référence</text>
<rect x="538" y="333" width="92" height="1" fill="#222"/><rect x="538" y="334" width="92" height="1" fill="#d0d0d0"/>
<path d="M581.3,347.5 L584.4,345.3 L594.8,355.4 L584.4,365.6 L581.3,363.4" fill="none" stroke="#fff" stroke-width="1.2"/>
<path d="M573.2,355.4 L579.5,350.2 V353 H584 V357.8 H579.5 V360.6 Z" fill="none" stroke="#fff" stroke-width="1.1"/>
<text transform="translate(543,400.5) scale(0.808,1)" fill="#ff00ff" font-weight="bold">Sauvegarde</text>
<rect x="538" y="409" width="92" height="1" fill="#222"/><rect x="538" y="410" width="92" height="1" fill="#d0d0d0"/>
<path d="M581.3,426.5 L584.4,424.3 L594.8,434.3 L584.4,444.5 L581.3,442.5" fill="none" stroke="#fff" stroke-width="1.2"/>
<path d="M584.8,434.3 L578.5,429.3 V432 H574 V436.7 H578.5 V439.5 Z" fill="none" stroke="#fff" stroke-width="1.1"/>
</svg></body></html>
